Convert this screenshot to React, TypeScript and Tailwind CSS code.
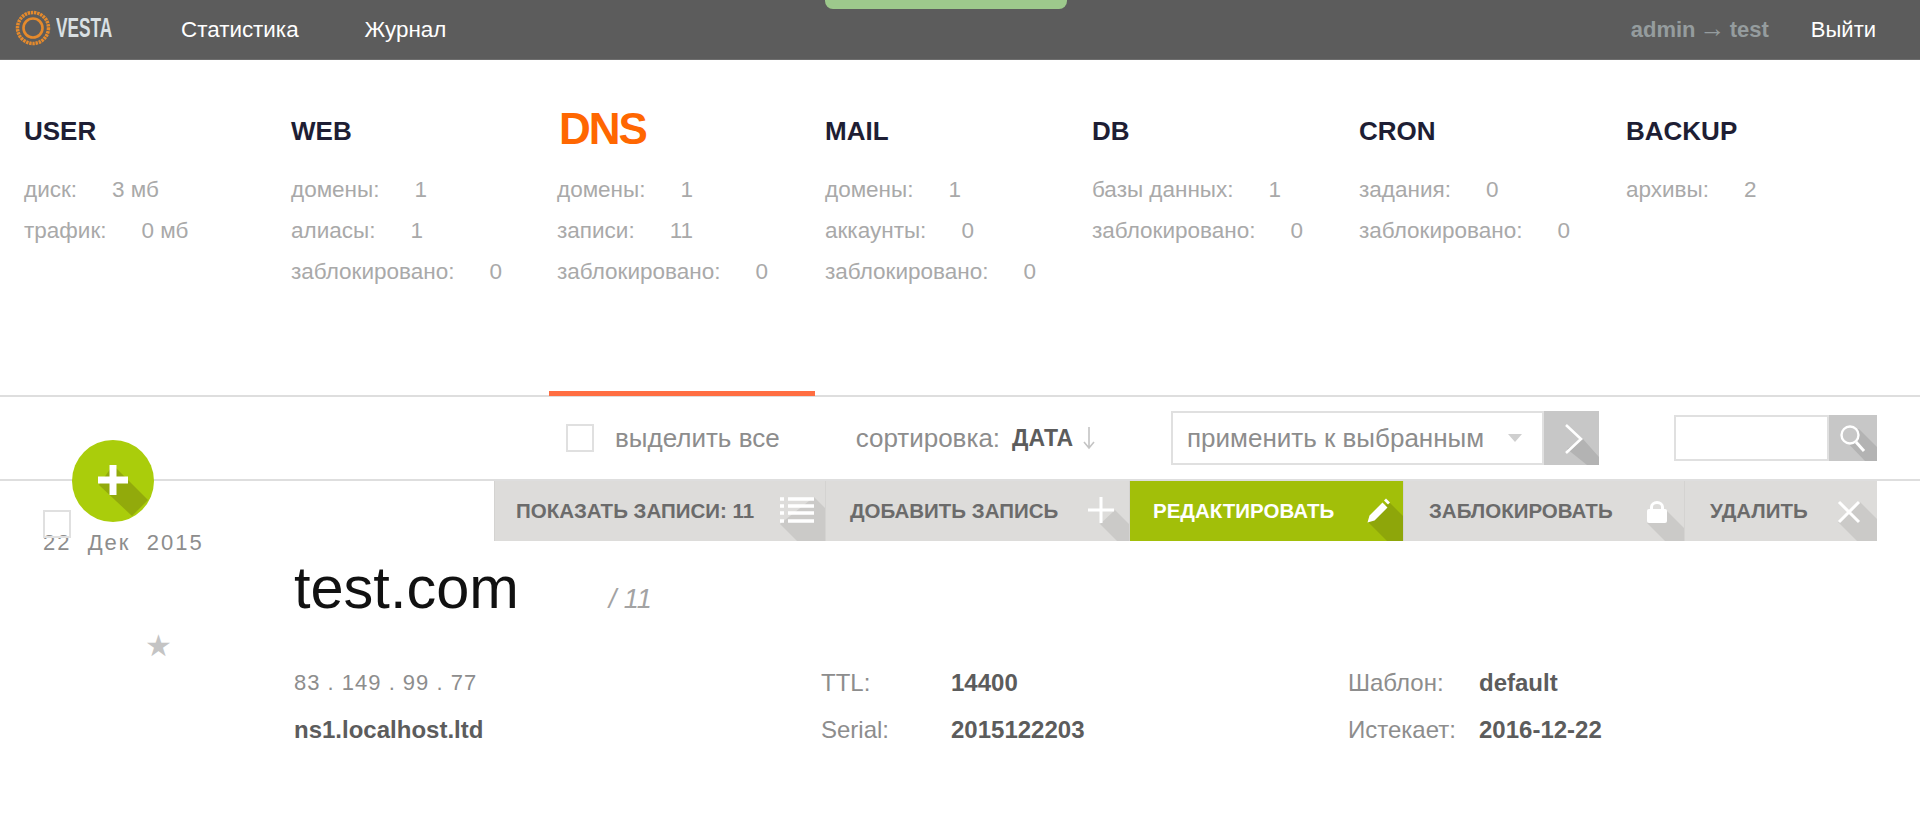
const SANS = "font-['Liberation_Sans',Arial,sans-serif]"

const TABS = [
  { title: 'USER', rows: [['диск:', '3 мб'], ['трафик:', '0 мб']] },
  { title: 'WEB', rows: [['домены:', '1'], ['алиасы:', '1'], ['заблокировано:', '0']] },
  { title: 'DNS', active: true, rows: [['домены:', '1'], ['записи:', '11'], ['заблокировано:', '0']] },
  { title: 'MAIL', rows: [['домены:', '1'], ['аккаунты:', '0'], ['заблокировано:', '0']] },
  { title: 'DB', rows: [['базы данных:', '1'], ['заблокировано:', '0']] },
  { title: 'CRON', rows: [['задания:', '0'], ['заблокировано:', '0']] },
  { title: 'BACKUP', rows: [['архивы:', '2']] },
]

function Logo() {
  return (
    <div className="-mt-[3px] flex items-center">
      <svg width="36" height="36" viewBox="0 0 36 36" className="shrink-0">
        <circle cx="18" cy="18" r="15.5" fill="none" stroke="#e58a2c" strokeWidth="3.5" strokeDasharray="2.4 0.8" />
        <circle cx="18" cy="18" r="9.5" fill="none" stroke="#e58a2c" strokeWidth="2.6" />
      </svg>
      <span className="ml-[5px] w-[58px] origin-left scale-x-[0.64] text-[27px] leading-none font-bold text-[#d9e0e4]">VESTA</span>
    </div>
  )
}

function Header() {
  return (
    <header className="relative flex h-[60px] items-center border-b border-[#6e6e6e] bg-[#5c5c5c] pr-[44px] pl-[15px]">
      <div className="absolute top-0 left-[825px] h-[9px] w-[242px] rounded-b-lg bg-[#9dc98c]" />
      <Logo />
      <nav className="ml-[67px] flex gap-[66px] text-[22.400px] text-white">
        <a>Статистика</a>
        <a>Журнал</a>
      </nav>
      <div className="ml-auto flex items-center gap-[42px] text-[22px]">
        <span className="font-bold text-[#959c9e]">
          admin <span className="-mx-[2px] text-[26px] leading-none font-normal">→</span> test
        </span>
        <a className="text-white">Выйти</a>
      </div>
    </header>
  )
}

function StatTabs() {
  return (
    <section className="flex h-[337px] border-b-2 border-[#dedede] pl-[24px]">
      {TABS.map((tab) => (
        <div key={tab.title} className="relative w-[267px] shrink-0">
          {tab.active && <div className="absolute right-[10px] -bottom-[1px] -left-[9px] h-[5px] bg-[#ff6e42]" />}
          <div className="flex h-[89px] items-end">
            {tab.active ? (
              <h2 className="ml-[1px] text-[44px] leading-[40px] font-bold tracking-[-2px] text-[#ff6701]">{tab.title}</h2>
            ) : (
              <h2 className="text-[26px] leading-[36px] font-bold text-[#1e1e34]">{tab.title}</h2>
            )}
          </div>
          <div className={tab.active ? 'mt-[20px] -ml-[1px]' : 'mt-[20px]'}>
            {tab.rows.map(([label, value]) => (
              <div key={label} className="flex h-[41px] items-center text-[22.500px] text-[#a9a9a9]">
                <span>{label}</span>
                <span className="ml-[35px]">{value}</span>
              </div>
            ))}
          </div>
        </div>
      ))}
    </section>
  )
}

function Toolbar() {
  return (
    <section className="flex h-[84px] items-center border-b-2 border-[#dedede] pr-[43px] pl-[566px]">
      <span className="h-[28px] w-[28px] shrink-0 border-2 border-[#e0e0e0]" />
      <span className="ml-[21px] text-[26px] text-[#8d8d8d]">выделить все</span>
      <span className="ml-[76px] text-[26px] text-[#8d8d8d]">сортировка:</span>
      <span className="ml-[12px] text-[23px] font-bold text-[#5c5c5c]">ДАТА</span>
      <svg width="14" height="24" viewBox="0 0 14 24" className="ml-[9px]">
        <path d="M7 1v21M2 16l5 6 5-6" fill="none" stroke="#c4c4c4" strokeWidth="1.6" />
      </svg>
      <div className="ml-auto flex h-[54px]">
        <div className="flex w-[373px] items-center border-2 border-[#e0e0e0] pl-[14px] text-[26px] text-[#8d8d8d]">
          <span>применить к выбранным</span>
          <svg width="14" height="8" viewBox="0 0 14 8" className="ml-[24px]">
            <path d="M0 0h14L7 8z" fill="#cfcfcf" />
          </svg>
        </div>
        <div className="relative w-[55px] overflow-hidden bg-[#c7c7c7]">
          <svg width="55" height="54" viewBox="0 0 55 54" className="absolute inset-0">
            <path d="M39 28L55 46V54H43L23 38z" fill="#b3b3b3" />
            <path d="M22 14l15 14-15 14" fill="none" stroke="#fff" strokeWidth="2.6" />
          </svg>
        </div>
      </div>
      <div className="ml-[75px] flex h-[46px]">
        <div className="w-[155px] border-2 border-[#e0e0e0]" />
        <div className="relative w-[48px] overflow-hidden bg-[#c7c7c7]">
          <svg width="48" height="46" viewBox="0 0 48 46" className="absolute inset-0">
            <path d="M30 14L48 32V46H36L13 22z" fill="#b3b3b3" />
            <circle cx="21" cy="20" r="8.5" fill="#c7c7c7" stroke="#fff" strokeWidth="2.4" />
            <path d="M27 27l8 9" stroke="#fff" strokeWidth="3" />
          </svg>
        </div>
      </div>
    </section>
  )
}

const ACTIONS = [
  {
    label: 'показать записи: 11', w: 'w-[331px]', pl: 'pl-[21px]',
    shadow: 'M49 16L60 27V60H32L15 43z',
    icon: <path d="M15 18h4M23 18h26M15 25h4M23 25h26M15 32h4M23 32h26M15 40h4M23 40h26" stroke="#fff" strokeWidth="3.500" />,
  },
  {
    label: 'добавить запись', w: 'w-[304px]', pl: 'pl-[24px]',
    shadow: 'M46 29L60 43V60H48L31 43z',
    icon: <path d="M32 16v26M19 29h26" stroke="#fff" strokeWidth="3" />,
  },
  {
    label: 'редактировать', w: 'w-[274px]', pl: 'pl-[23px]', active: true,
    shadow: 'M46 21L60 35V60H44L25 41z',
    icon: <path d="M24.500 41.500l2-7 13-13 5 5-13 13zM41 19.500l2-2 4 4-2 2z" fill="#fff" />,
  },
  {
    label: 'заблокировать', w: 'w-[281px]', pl: 'pl-[25px]',
    shadow: 'M43 30L60 47V60H41L23 42z',
    icon: (
      <>
        <rect x="23" y="28" width="20" height="14" rx="2" fill="#fff" />
        <path d="M27.500 30v-4a5.500 4.500 0 0 1 11 0v4" fill="none" stroke="#fff" strokeWidth="3" />
      </>
    ),
  },
  {
    label: 'удалить', w: 'w-[193px]', pl: 'pl-[25px]',
    shadow: 'M43 21L60 38V60H40L21 41z',
    icon: <path d="M22 21l20 20M42 21L22 41" stroke="#fff" strokeWidth="3" />,
  },
]

function ActionBar() {
  return (
    <div className="flex justify-end pr-[43px]">
      {ACTIONS.map((a) => (
        <a
          key={a.label}
          className={`relative flex h-[60px] items-center overflow-hidden border-l border-[#d4d3d1] text-[20.500px] font-bold uppercase ${a.w} ${a.pl} ${
            a.active ? 'bg-[#a2bf09] text-white' : 'bg-[#dddcda] text-[#6b6b6b]'
          }`}
        >
          {a.label}
          <svg width="60" height="60" viewBox="0 0 60 60" className="absolute top-0 right-0">
            <path d={a.shadow} fill={a.active ? '#8ea60a' : '#cbcac8'} />
            {a.icon}
          </svg>
        </a>
      ))}
    </div>
  )
}

function Detail({ label, value, valueX }: { label: string; value: string; valueX: string }) {
  return (
    <div className="flex h-[47px] items-center text-[24px]">
      <span className={`${valueX} text-[#8d8d8d]`}>{label}</span>
      <span className="font-bold text-[#5c5c5c]">{value}</span>
    </div>
  )
}

function DomainRow() {
  return (
    <section className="relative flex">
      <div className="absolute top-[-41px] left-[72px] h-[82px] w-[82px] overflow-hidden rounded-full bg-[#aacd0b]">
        <svg width="82" height="82" viewBox="0 0 82 82">
          <path d="M41 25L76 60 60 76 27 45z" fill="#92aa0b" />
          <path d="M41 25v30M26 40h30" stroke="#fff" strokeWidth="7" />
        </svg>
      </div>
      <div className="absolute top-[29px] left-[43px] h-[28px] w-[28px] border-2 border-[#e0e0e0]" />
      <div className="w-[294px] shrink-0 pt-[47px] pl-[43px]">
        <div className="text-[22px] leading-[30px] tracking-[2px] whitespace-pre text-[#8d8d8d]">22  Дек  2015</div>
        <div className="mt-[71px] ml-[102px] text-[30px] leading-[34px] text-[#c4c4c4]">★</div>
      </div>
      <div className="min-w-0 flex-1">
        <ActionBar />
        <div className="mt-[12px] flex items-baseline">
          <h1 className="text-[59.500px] leading-[70px] font-normal text-[#111]">test.com</h1>
          <span className="ml-[90px] text-[27px] text-[#a3a3a3] italic">/ 11</span>
        </div>
        <div className="mt-[36px] flex">
          <div className="w-[527px]">
            <div className="flex h-[47px] items-center text-[22px] tracking-[1px] text-[#8d8d8d]">83 . 149 . 99 . 77</div>
            <div className="flex h-[47px] items-center text-[24px] font-bold text-[#5c5c5c]">ns1.localhost.ltd</div>
          </div>
          <div className="w-[527px]">
            <Detail label="TTL:" value="14400" valueX="w-[130px]" />
            <Detail label="Serial:" value="2015122203" valueX="w-[130px]" />
          </div>
          <div>
            <Detail label="Шаблон:" value="default" valueX="w-[131px]" />
            <Detail label="Истекает:" value="2016-12-22" valueX="w-[131px]" />
          </div>
        </div>
      </div>
    </section>
  )
}

export default function App() {
  return (
    <div className={`min-h-screen overflow-hidden bg-white ${SANS}`}>
      <Header />
      <StatTabs />
      <Toolbar />
      <DomainRow />
    </div>
  )
}
